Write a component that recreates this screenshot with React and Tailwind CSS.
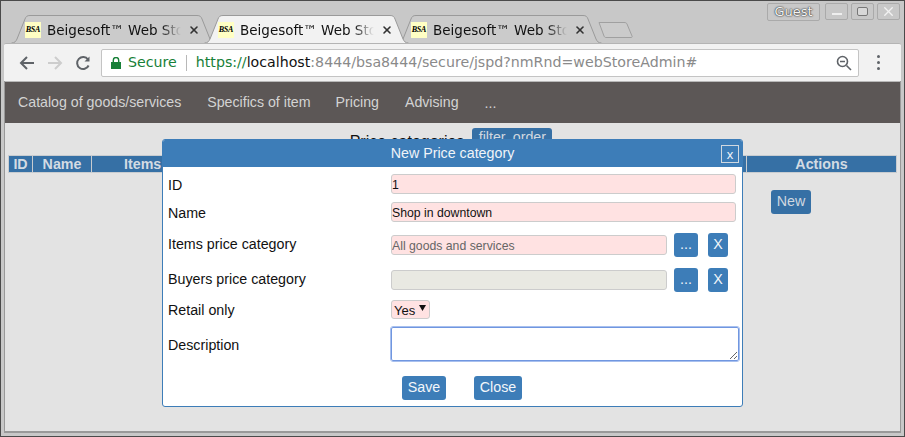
import { X } from 'lucide-react';

const browserFont = "[font-family:'DejaVu_Sans',sans-serif]";

function Favicon() {
  return (
    <div className="w-4 h-4 shrink-0 bg-[#ffffc4] flex items-center justify-center text-[8px] font-bold italic text-black [font-family:'Liberation_Serif',serif] tracking-[-0.2px]">
      BSA
    </div>
  );
}

function Tab({ active, className }) {
  const fill = active ? '#f2f2f2' : '#cbcbcb';
  return (
    <div className={`relative h-[28px] shrink-0 w-[205px] ${active ? 'z-10' : ''} ${className}`}>
      <svg className="absolute inset-0" width="205" height="28" viewBox="0 0 205 28">
        <path d="M0.5 28 C4 28 5 26 6 24 L14 4 C15 1.5 16 0.5 19 0.5 L186 0.5 C189 0.5 190 1.5 191 4 L199 24 C200 26 201 28 204.5 28" fill={fill} stroke="#9a9a9a" />
      </svg>
      <div className="absolute left-[14px] top-[7px] w-[180px] flex items-center">
        <Favicon />
        <span className={`ml-[6px] text-[13.5px] leading-4 text-[#111] whitespace-nowrap w-[134px] overflow-hidden [mask-image:linear-gradient(to_right,black_85%,transparent)] ${browserFont}`}>
          Beigesoft™ Web Store
        </span>
        <X size={12} strokeWidth={3.2} className="ml-[7px] text-[#333]" />
      </div>
    </div>
  );
}

function WinButton({ children }) {
  return <div className="w-[23px] h-[17px] border border-[#aaa] rounded-[2px] flex items-center justify-center text-[#f2f2f2]">{children}</div>;
}

function BrowserChrome() {
  return (
    <>
      <div className="h-[42px] flex items-end pl-[10px] relative">
        <Tab />
        <Tab active className="-ml-[12px]" />
        <Tab className="-ml-[12px]" />
        <svg className="-ml-[4px] mb-[5px] shrink-0" width="36" height="17" viewBox="0 0 36 17">
          <path d="M1 1.5 L26 1.5 C28 1.5 28.5 2 29 3 L34 15 C34.5 16 34 16.5 33 16.5 L8 16.5 C7 16.5 6.5 16 6 15 Z" fill="#cbcbcb" stroke="#a0a0a0" />
        </svg>
        <div className="absolute top-[2px] right-[4px] flex">
          <div className="w-[53px] h-[18px] mr-[5px] border border-[#aaa] rounded-[2px] flex items-center justify-center text-[13px] text-[#f4f4f4] [font-family:'DejaVu_Sans',sans-serif] [text-shadow:0_0_2px_#222,0_0_1px_#222]">
            Guest
          </div>
          <WinButton><div className="w-[10px] h-[2px] mt-[5px] bg-[#eeeeee]" /></WinButton>
          <div className="w-[3px]" />
          <WinButton><div className="w-[11px] h-[9px] border border-[#777] rounded-[2px] bg-[#d8d8d8]" /></WinButton>
          <div className="w-[3px]" />
          <WinButton><X size={15} strokeWidth={2.2} /></WinButton>
        </div>
      </div>
      <div className="h-[38px] mx-[3px] bg-[#f2f2f2] border-t border-[#b4b4b4] flex items-center rounded-t-[2px]">
        <svg className="ml-[15px] shrink-0" width="16" height="16" viewBox="0 0 16 16" fill="none" stroke="#5f6368" strokeWidth="2">
          <path d="M15 8H2M8 2 2 8l6 6" />
        </svg>
        <svg className="ml-[12px] shrink-0" width="16" height="16" viewBox="0 0 16 16" fill="none" stroke="#cdcdcd" strokeWidth="2">
          <path d="M1 8h13M8 2l6 6-6 6" />
        </svg>
        <svg className="ml-[12px] shrink-0" width="16" height="16" viewBox="0 0 16 16" fill="none" stroke="#5f6368" strokeWidth="2">
          <path d="M13.6 10.5A6 6 0 1 1 13 4.5" />
          <path d="M14.5 1.5v5h-5z" fill="#5f6368" stroke="none" />
        </svg>
        <div className={`ml-[10px] w-[758px] h-[28px] bg-white border border-[#c4c4c4] rounded-[2px] flex items-center text-[14.2px] whitespace-nowrap ${browserFont}`}>
          <svg className="ml-[9px] shrink-0" width="10" height="12" viewBox="0 0 10 12">
            <path d="M0 5h10v7H0z" fill="#188038" />
            <path d="M2.3 5V3.2a2.7 2.7 0 0 1 5.4 0V5" fill="none" stroke="#188038" strokeWidth="1.4" />
          </svg>
          <span className="ml-[7px] text-[#188038]">Secure</span>
          <span className="ml-[9px] w-px h-[16px] bg-[#b8b8b8]" />
          <span className="ml-[9px] text-[#188038]">https://</span>
          <span className="text-[#111]">localhost</span>
          <span className="text-[#8a8a8a]">:8444/bsa8444/secure/jspd?nmRnd=webStoreAdmin#</span>
          <svg className="ml-auto mr-[6px] shrink-0" width="16" height="16" viewBox="0 0 16 16" fill="none" stroke="#5f6368" strokeWidth="1.6">
            <circle cx="6.5" cy="6.5" r="5" />
            <path d="M10.5 10.5 15 15M4 6.5h5" />
          </svg>
        </div>
        <div className="ml-[18px] flex flex-col gap-[3px]">
          <div className="w-[3px] h-[3px] rounded-full bg-[#5f6368]" />
          <div className="w-[3px] h-[3px] rounded-full bg-[#5f6368]" />
          <div className="w-[3px] h-[3px] rounded-full bg-[#5f6368]" />
        </div>
      </div>
    </>
  );
}

function Nav() {
  return (
    <nav className="h-[42px] bg-[#5c5756] flex items-center text-[14.2px] text-[#d3d3d3] pl-[13px] border-t border-[#b8b8b8]">
      <span>Catalog of goods/services</span>
      <span className="ml-[26px]">Specifics of item</span>
      <span className="ml-[25px]">Pricing</span>
      <span className="ml-[26px]">Advising</span>
      <span className="ml-[26px] mt-[2px]">...</span>
    </nav>
  );
}

function Th({ className, children }) {
  return <div className={`h-[16px] pt-[2px] flex items-center justify-center border-r border-[#c8ccd0] ${className}`}>{children}</div>;
}

function PageBehind() {
  return (
    <div className="pt-[5px] px-[3px]">
      <div className="h-[27px] flex justify-center items-start text-[16px] text-[#111] pr-[3px]">
        <span className="mt-[2px]">Price categories</span>
        <span className="ml-[8px] w-[80px] h-[20px] bg-[#3670a5] rounded-[3px] text-[#d0d8e0] text-[14.25px] flex items-center justify-center">filter, order</span>
      </div>
      <div className="w-[889px] h-[18px] border border-[#c8ccd0] bg-[#3670a5] flex text-[14.25px] font-bold text-[#d3dbe3]">
        <Th className="w-[24px]">ID</Th>
        <Th className="w-[59px]">Name</Th>
        <Th className="w-[655px] justify-start pl-[32px]">Items</Th>
        <div className="flex-1 h-[16px] pt-[2px] flex items-center justify-center">Actions</div>
      </div>
      <div className="flex justify-end pr-[86px] pt-[17px]">
        <button className="w-[40px] h-[24px] bg-[#3670a5] rounded-[3px] text-[#d0d8e0] text-[14.25px]">New</button>
      </div>
    </div>
  );
}

function BlueButton({ className, children }) {
  return <button className={`h-[24px] bg-[#3d7db8] rounded-[3px] text-[#f2f6fa] text-[14.25px] shrink-0 ${className}`}>{children}</button>;
}

function Field({ label, labelClass, className, children }) {
  return (
    <div className={`flex items-center ${className}`}>
      <label className={`w-[223px] shrink-0 text-[14.25px] leading-[16px] text-[#111] ${labelClass}`}>{label}</label>
      {children}
    </div>
  );
}

const inputBase = 'h-[20px] border border-[#cccccc] rounded-[3px] text-[12.25px] leading-none px-0 pt-[2px] outline-none';

function PickerRow({ label, value, className, bg }) {
  return (
    <Field label={label} labelClass="pb-[2px]" className={className}>
      <input readOnly value={value} className={`w-[276px] ${inputBase} ${bg} text-[#666]`} />
      <BlueButton className="w-[24px] ml-[7px]">...</BlueButton>
      <BlueButton className="w-[20px] ml-[10px]">X</BlueButton>
    </Field>
  );
}

function Modal() {
  return (
    <div className="absolute left-[161px] top-[138px] w-[581px] h-[268px] bg-white border border-[#3d7db8] rounded-[3px] overflow-hidden">
      <div className="h-[27px] bg-[#3d7db8] relative flex items-center justify-center text-[14.25px] text-[#f0f4f8]">
        New Price category
        <button className="absolute right-[3px] top-[5px] w-[18px] h-[18px] border border-[#d0d8e0] text-[13px] leading-none text-[#f0f4f8]">x</button>
      </div>
      <div className="pl-[5px]">
        <Field label="ID" labelClass="pt-[2px]" className="mt-[7px]">
          <input readOnly value="1" className={`w-[345px] bg-[#ffe2e2] text-[#111] ${inputBase}`} />
        </Field>
        <Field label="Name" labelClass="pt-[2px]" className="mt-[8px]">
          <input readOnly value="Shop in downtown" className={`w-[345px] bg-[#ffe2e2] text-[#111] ${inputBase}`} />
        </Field>
        <PickerRow label="Items price category" value="All goods and services" bg="bg-[#ffe2e2]" className="mt-[11px]" />
        <PickerRow label="Buyers price category" value="" bg="bg-[#e9e9e2]" className="mt-[11px]" />
        <Field label="Retail only" labelClass="pt-[1px]" className="mt-[8px]">
          <div className="relative w-[39px] h-[19px]">
            <select className="block appearance-none w-full h-full bg-[#ffe2e2] border border-[#cccccc] rounded-[3px] text-[13px] leading-none pl-[2px] pt-[2px] text-[#111]">
              <option>Yes</option>
            </select>
            <svg className="absolute left-[28px] top-[5px] pointer-events-none" width="7" height="6" viewBox="0 0 7 6">
              <path d="M0 0h7L3.5 6z" fill="#111" />
            </svg>
          </div>
        </Field>
        <Field label="Description" labelClass="pt-[2px]" className="mt-[8px]">
          <textarea readOnly className="w-[348px] h-[34px] block border border-[#7096e0] rounded-[2px] outline outline-1 outline-[#a8c0ee] bg-white" />
        </Field>
        <div className="flex mt-[15px] ml-[234px]">
          <BlueButton className="w-[44px]">Save</BlueButton>
          <BlueButton className="w-[48px] ml-[28px]">Close</BlueButton>
        </div>
      </div>
    </div>
  );
}

export default function App() {
  return (
    <div className="w-[905px] h-[437px] relative overflow-hidden bg-[#c8c8c8] border border-[#4a4a4a] [font-family:'Liberation_Sans',sans-serif]">
      <BrowserChrome />
      <div className="mx-[3px] h-[352px] bg-[#e3e3e3] border-x border-b-2 border-[#999]">
        <Nav />
        <PageBehind />
      </div>
      <Modal />
    </div>
  );
}
